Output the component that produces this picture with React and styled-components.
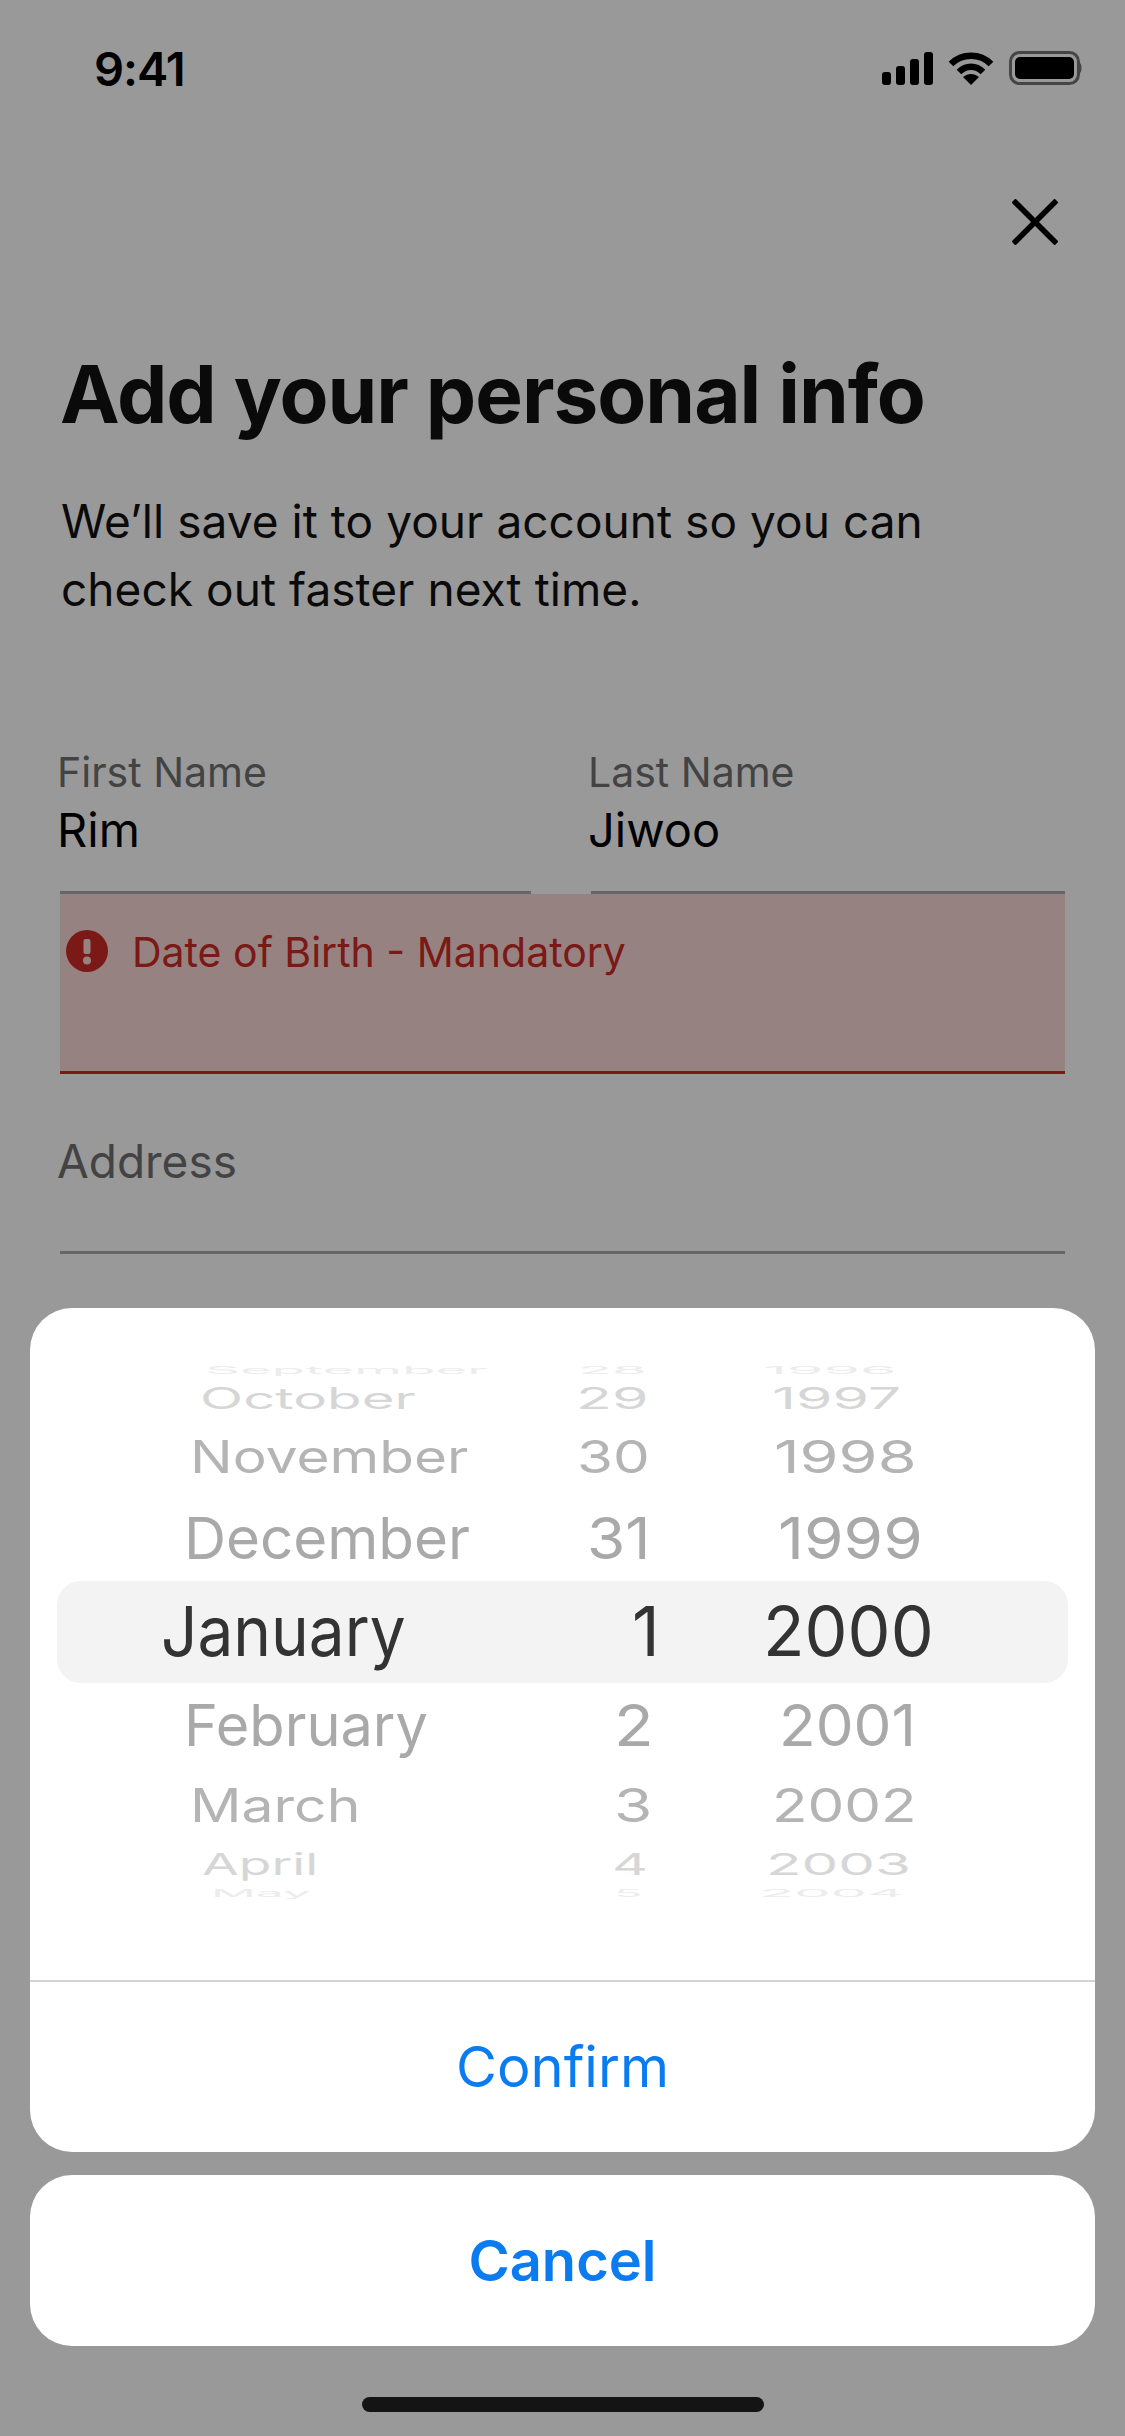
import React from 'react'
import styled, { createGlobalStyle } from 'styled-components'

const Global = createGlobalStyle`
  html, body { margin: 0; padding: 0; background: #fff; }
  * { box-sizing: border-box; }
  body { font-family: Inter, "Noto Sans", sans-serif; }
`

const Screen = styled.div`
  position: relative;
  width: 1125px;
  height: 2436px;
  overflow: hidden;
  background: #fff;
`

const Scrim = styled.div`
  position: absolute;
  inset: 0;
  background: rgba(0, 0, 0, 0.4);
`

const StatusBar = styled.div`
  height: 136px;
  display: flex;
  align-items: center;
  justify-content: space-between;
  padding: 0 43px 0 94px;
`

const Time = styled.span`
  font-size: 47px;
  font-weight: 600;
  color: #000;
  letter-spacing: -1px;
`

const StatusIcons = styled.div`
  display: flex;
  align-items: center;
  gap: 15px;
`

const CloseRow = styled.div`
  display: flex;
  justify-content: flex-end;
  padding: 63px 67px 0 0;
  height: 113px;
`

const Form = styled.div`
  padding: 0 60px;
`

const Title = styled.h1`
  margin: 100px 0 0;
  font-size: 80px;
  line-height: 90px;
  font-weight: 700;
  color: #111;
  letter-spacing: -1px;
`

const Lead = styled.p`
  margin: 48px 0 0 1px;
  font-size: 46px;
  line-height: 68px;
  color: #111;
  letter-spacing: 0.05px;
`

const NameRow = styled.div`
  display: grid;
  grid-template-columns: 471px 474px;
  justify-content: space-between;
  margin-top: 101px;
`

const Field = styled.div`
  height: ${p => p.$h || 170}px;
  padding-top: ${p => p.$top || 0}px;
  border-bottom: 3px solid ${p => p.$line || '#aaa'};
`

const Label = styled.div`
  margin-left: -3px;
  font-size: 41px;
  line-height: 52px;
  color: #717171;
`

const Value = styled.div`
  margin-left: -3px;
  margin-top: 2px;
  font-size: 47px;
  line-height: 60px;
  color: #000;
`

const ErrorBox = styled.div`
  height: 180px;
  padding: 36px 0 0 6px;
  display: flex;
  align-items: flex-start;
  gap: 24px;
  background: #fcd9d9;
  border-bottom: 3px solid #cc2b25;
`

const ErrorText = styled.span`
  font-size: 41px;
  line-height: 44px;
  color: #cc2b25;
`

const AddressLabel = styled(Label)`
  font-size: 46px;
`

const SheetLayer = styled.div`
  position: absolute;
  left: 0;
  right: 0;
  bottom: 0;
  display: flex;
  flex-direction: column;
  gap: 23px;
  padding: 0 30px;
`

const Sheet = styled.div`
  background: #fff;
  border-radius: 42px;
  overflow: hidden;
`

const Wheel = styled.div`
  padding: 52px 27px 79px;
  border-bottom: 2px solid #d4d4d4;
`

const WheelRow = styled.div`
  display: grid;
  grid-template-columns: 503px 185px 1fr;
  grid-template-rows: 100%;
  align-items: center;
  height: ${p => p.$h}px;
  overflow: hidden;
  border-radius: 24px;
  background: ${p => (p.$active ? '#f3f3f3' : 'transparent')};
  color: ${p => p.$color};
`

const WheelCell = styled.div`
  padding-left: ${p => p.$x}px;
  white-space: nowrap;
  font-size: 62px;
  line-height: 1;
  font-weight: 400;
  transform-origin: ${p => p.$x}px 50%;
  transform: scale(${p => p.$sx}, ${p => p.$sy});
`

const SheetButton = styled.div`
  height: ${p => p.$h}px;
  display: flex;
  align-items: center;
  justify-content: center;
  font-size: 56px;
  font-weight: ${p => p.$weight};
  color: #0a7cf0;
`

const HomeZone = styled.div`
  height: 67px;
  padding-top: 28px;
  display: flex;
  justify-content: center;
`

const HomeBar = styled.div`
  width: 402px;
  height: 15px;
  border-radius: 8px;
  background: #141414;
`

// each cell: text, left offset in its column, horizontal squeeze
const rows = [
  { h: 20, color: '#ececec', sy: 0.17, m: ['September', 148, 0.88], d: ['28', 18, 0.9], y: ['1996', 18, 0.95] },
  { h: 38, color: '#d6d6d6', sy: 0.47, m: ['October', 143, 0.91], d: ['29', 16, 0.95], y: ['1997', 27, 0.95] },
  { h: 78, color: '#b4b4b4', sy: 0.73, m: ['November', 133, 0.915], d: ['30', 17, 0.94], y: ['1998', 29, 1.015] },
  { h: 85, color: '#a9a9a9', sy: 0.93, m: ['December', 127, 0.94], d: ['31', 27, 1], y: ['1999', 33, 1.03] },
  { h: 102, color: '#333', sy: 1.11, active: true, m: ['January', 104, 1.03], d: ['1', 72, 1.1], y: ['2000', 18, 1.1] },
  { h: 86, color: '#a9a9a9', sy: 0.93, m: ['February', 127, 0.93], d: ['2', 54, 1.05], y: ['2001', 34, 0.97] },
  { h: 74, color: '#b4b4b4', sy: 0.74, m: ['March', 133, 0.92], d: ['3', 54, 1], y: ['2002', 27, 0.94] },
  { h: 42, color: '#d6d6d6', sy: 0.48, m: ['April', 145, 0.86], d: ['4', 52, 0.9], y: ['2003', 21, 0.94] },
  { h: 16, color: '#ececec', sy: 0.16, m: ['May', 154, 0.8], d: ['5', 54, 0.75], y: ['2004', 14, 0.93] },
]

function SignalIcon() {
  return (
    <svg width="51" height="33" viewBox="0 0 51 33" fill="#000">
      <rect x="0" y="20" width="9" height="13" rx="3" />
      <rect x="14" y="14" width="9" height="19" rx="3" />
      <rect x="28" y="7" width="9" height="26" rx="3" />
      <rect x="42" y="0" width="9" height="33" rx="3" />
    </svg>
  )
}

function WifiIcon() {
  return (
    <svg width="46" height="33" viewBox="0 0 46 33" fill="none" stroke="#000" strokeWidth="6.5">
      <path d="M3 12 C14 1 32 1 43 12" />
      <path d="M11 20 C18 13 28 13 35 20" />
      <path d="M23 33 L15 25 C20 21 26 21 31 25 Z" fill="#000" stroke="none" />
    </svg>
  )
}

function BatteryIcon() {
  return (
    <svg width="73" height="34" viewBox="0 0 73 34">
      <rect x="1.5" y="1.5" width="68" height="31" rx="9" fill="none" stroke="#000" strokeOpacity="0.55" strokeWidth="3" />
      <rect x="6" y="6" width="59" height="22" rx="5" fill="#000" />
      <path d="M71 12 C73 13 73 21 71 22 Z" fill="#000" fillOpacity="0.55" />
    </svg>
  )
}

function CloseIcon() {
  return (
    <svg width="46" height="46" viewBox="0 0 46 46" stroke="#000" strokeWidth="5.5">
      <path d="M1.5 1.5 L44.5 44.5 M44.5 1.5 L1.5 44.5" />
    </svg>
  )
}

function ErrorIcon() {
  return (
    <svg width="42" height="42" viewBox="0 0 42 42">
      <circle cx="21" cy="21" r="21" fill="#cc2b25" />
      <rect x="17.5" y="9" width="7" height="15" rx="2" fill="#fcd9d9" />
      <circle cx="21" cy="30.5" r="4" fill="#fcd9d9" />
    </svg>
  )
}

export default function App() {
  return (
    <Screen>
      <Global />
      <StatusBar>
        <Time>9:41</Time>
        <StatusIcons>
          <SignalIcon />
          <WifiIcon />
          <BatteryIcon />
        </StatusIcons>
      </StatusBar>
      <CloseRow>
        <CloseIcon />
      </CloseRow>
      <Form>
        <Title>Add your personal info</Title>
        <Lead>
          We’ll save it to your account so you can
          <br />
          check out faster next time.
        </Lead>
        <NameRow>
          <Field $top={22}>
            <Label>First Name</Label>
            <Value>Rim</Value>
          </Field>
          <Field $top={22}>
            <Label>Last Name</Label>
            <Value>Jiwoo</Value>
          </Field>
        </NameRow>
        <ErrorBox>
          <ErrorIcon />
          <ErrorText>Date of Birth - Mandatory</ErrorText>
        </ErrorBox>
        <Field $h={180} $top={61}>
          <AddressLabel>Address</AddressLabel>
        </Field>
      </Form>
      <Scrim />
      <SheetLayer>
        <Sheet>
          <Wheel>
            {rows.map(r => (
              <WheelRow key={r.m[0]} $h={r.h} $color={r.color} $active={r.active}>
                <WheelCell $x={r.m[1]} $sx={r.m[2]} $sy={r.sy}>{r.m[0]}</WheelCell>
                <WheelCell $x={r.d[1]} $sx={r.d[2]} $sy={r.sy}>{r.d[0]}</WheelCell>
                <WheelCell $x={r.y[1]} $sx={r.y[2]} $sy={r.sy}>{r.y[0]}</WheelCell>
              </WheelRow>
            ))}
          </Wheel>
          <SheetButton $h={170} $weight={400}>Confirm</SheetButton>
        </Sheet>
        <Sheet>
          <SheetButton $h={171} $weight={600}>Cancel</SheetButton>
        </Sheet>
        <HomeZone>
          <HomeBar />
        </HomeZone>
      </SheetLayer>
    </Screen>
  )
}
